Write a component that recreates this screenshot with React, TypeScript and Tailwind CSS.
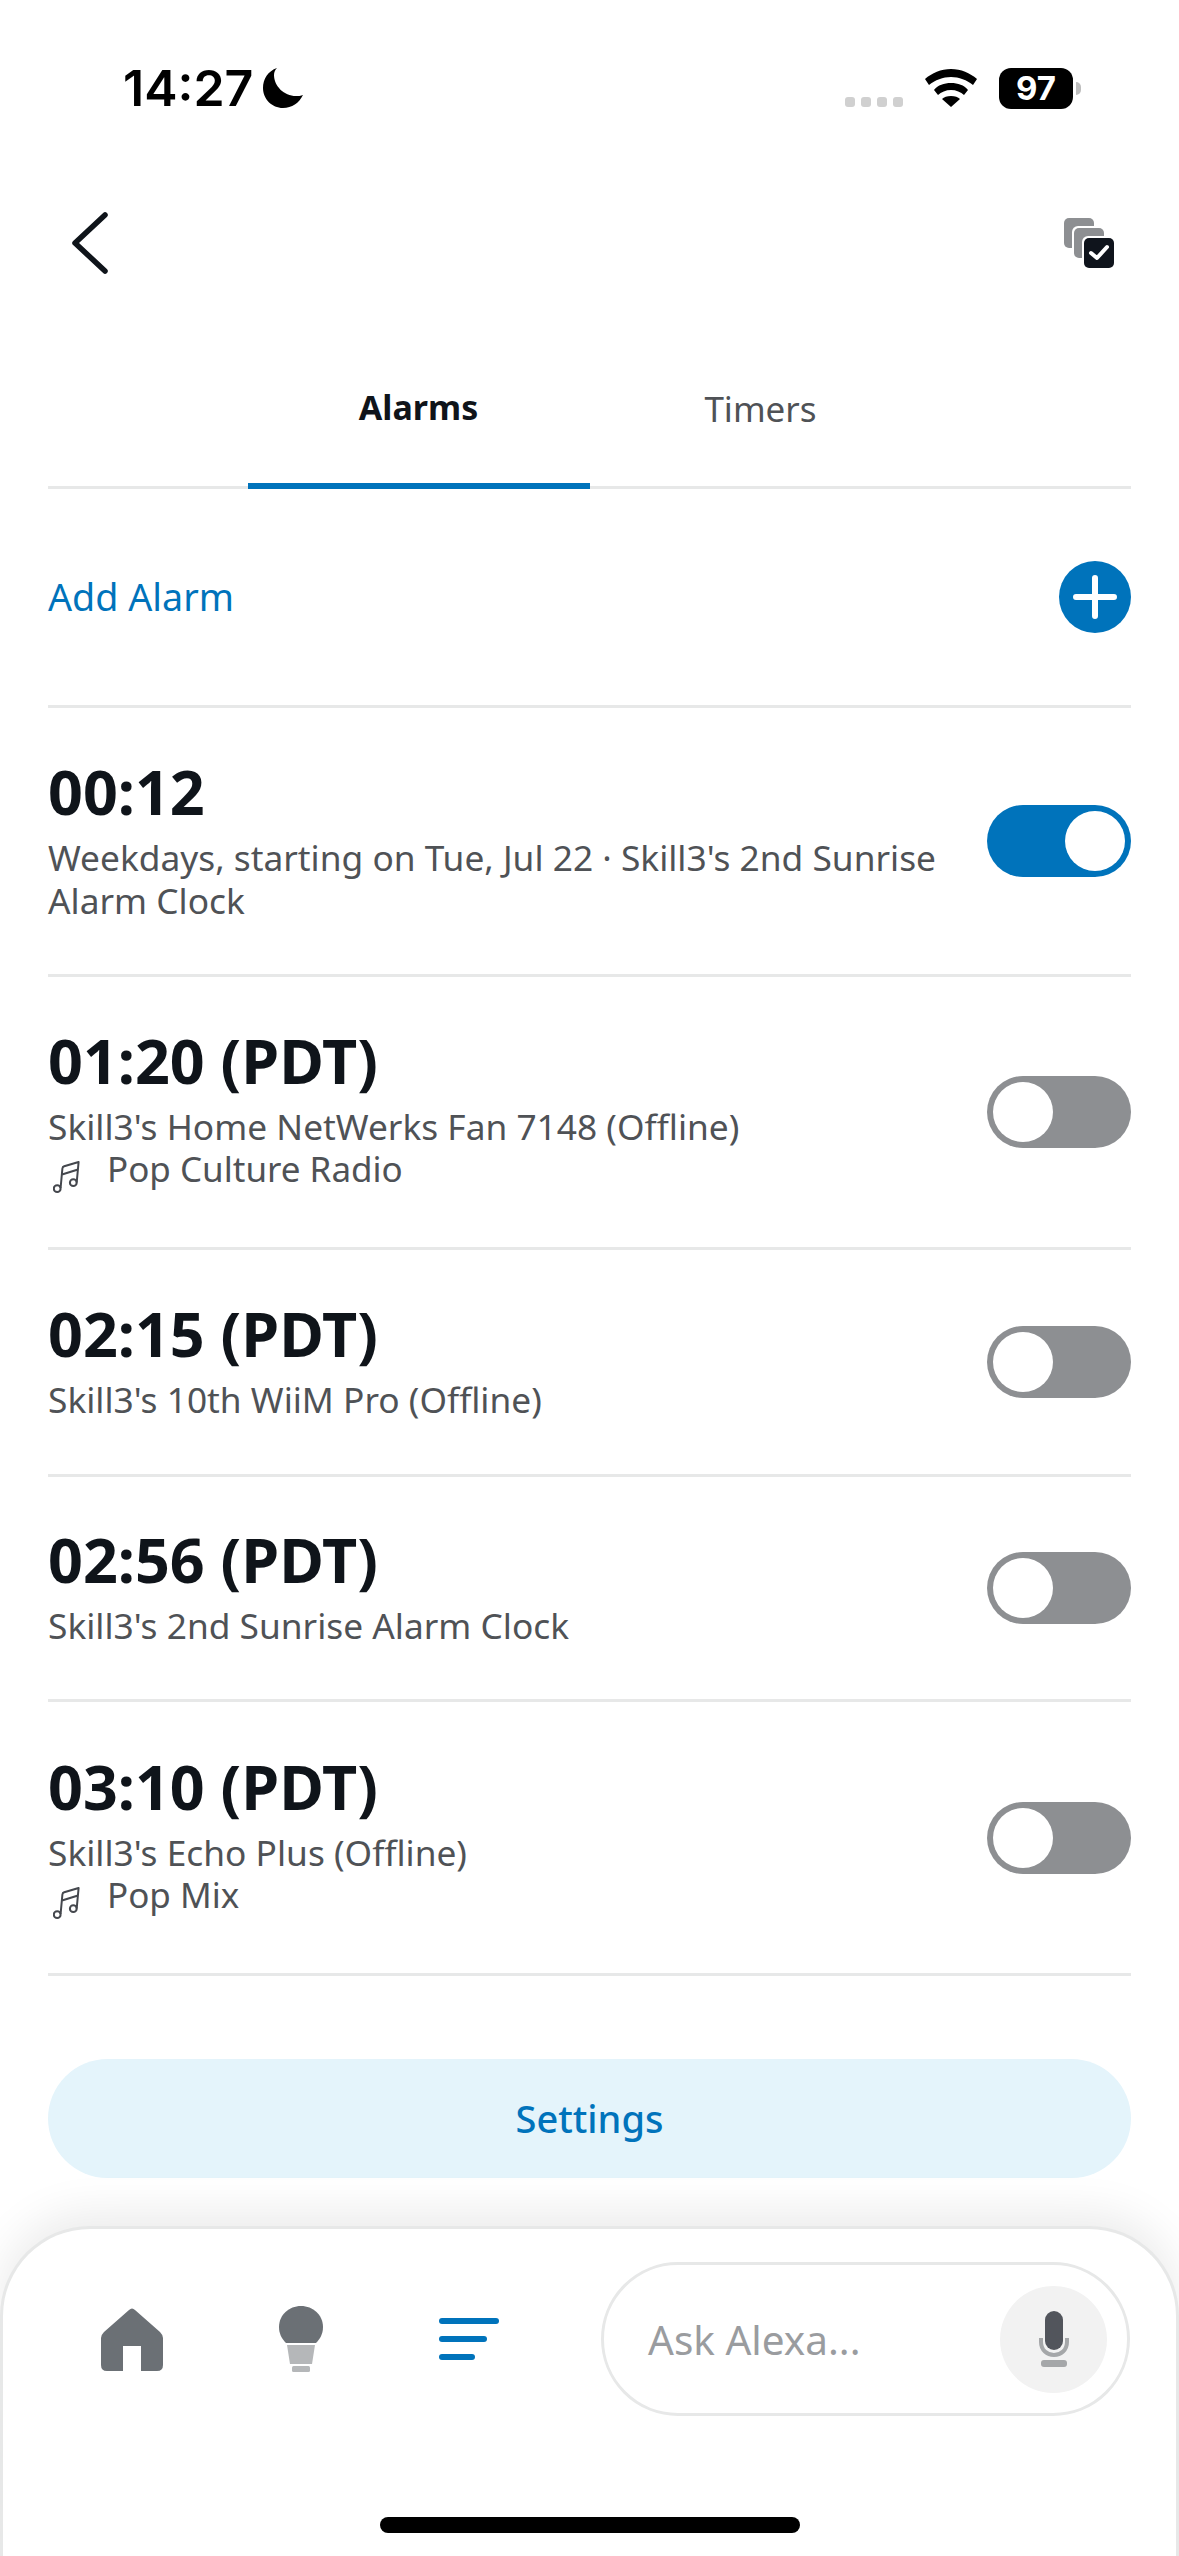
const bodyFont = "font-['Noto_Sans',sans-serif]";

function Toggle({ on }: { on: boolean }) {
  return (
    <div
      className={`flex h-[72px] w-[144px] shrink-0 items-center rounded-full p-[6px] ${
        on ? "justify-end bg-[#0073bb]" : "justify-start bg-[#8d8f92]"
      }`}
    >
      <div className="h-[60px] w-[60px] rounded-full bg-white" />
    </div>
  );
}

function NoteIcon() {
  return (
    <svg width="27" height="33" viewBox="0 0 27 33" fill="none" stroke="#44474d" strokeWidth="2" className="mt-[13px] ml-[5px] shrink-0">
      <circle cx="4.2" cy="27.7" r="3.4" />
      <circle cx="20.3" cy="21.7" r="3.4" />
      <path d="M7.6 27L9.4 7.5Q9.6 5.8 11.2 5.3L25.6 1L23.7 21.5M9 13.5L25 8.5" strokeLinejoin="round" />
    </svg>
  );
}

type Alarm = { time: string; lines: string[]; music?: string; on?: boolean; height: string };

const alarms: Alarm[] = [
  {
    time: "00:12",
    lines: ["Weekdays, starting on Tue, Jul 22 · Skill3's 2nd Sunrise", "Alarm Clock"],
    on: true,
    height: "h-[269px]",
  },
  { time: "01:20 (PDT)", lines: ["Skill3's Home NetWerks Fan 7148 (Offline)"], music: "Pop Culture Radio", height: "h-[273px]" },
  { time: "02:15 (PDT)", lines: ["Skill3's 10th WiiM Pro (Offline)"], height: "h-[227px]" },
  { time: "02:56 (PDT)", lines: ["Skill3's 2nd Sunrise Alarm Clock"], height: "h-[225px]" },
  { time: "03:10 (PDT)", lines: ["Skill3's Echo Plus (Offline)"], music: "Pop Mix", height: "h-[274px]" },
];

function AlarmRow({ alarm }: { alarm: Alarm }) {
  return (
    <div className={`flex items-center justify-between border-b-[3px] border-[#e7e8e8] ${alarm.height}`}>
      <div className="pb-[6px]">
        <div className="pb-[8px] text-[61px] leading-[73px] font-bold text-[#0f141a]">{alarm.time}</div>
        {alarm.lines.map((line) => (
          <div key={line} className="text-[35.3px] leading-[43px] text-[#4f5256]">
            {line}
          </div>
        ))}
        {alarm.music && (
          <div className="flex gap-[27px] text-[35px] leading-[42px] text-[#4f5256]">
            <NoteIcon />
            <span>{alarm.music}</span>
          </div>
        )}
      </div>
      <Toggle on={!!alarm.on} />
    </div>
  );
}

function StatusBar() {
  return (
    <div className="flex h-[190px] justify-between pt-[60px] pr-[98px] pl-[123px]">
      <div className="flex h-[56px] items-center gap-[9px]">
        <span className="font-['Inter',sans-serif] text-[50px] leading-none font-semibold text-black">14:27</span>
        <svg width="42" height="42" viewBox="0 0 42 42" fill="#000">
          <path d="M15 1C6 4 1 12 1 21c0 11 9 20 20 20 9 0 16-5 20-13-2 1-5 1-7 1C22 29 12 19 12 8c0-3 1-5 3-7z" />
        </svg>
      </div>
      <div className="flex h-[56px] items-center">
        <div className="mt-[28px] mr-[22px] flex gap-[6px]">
          <div className="h-[10px] w-[10px] rounded-[3px] bg-[#d0d0d0]" />
          <div className="h-[10px] w-[10px] rounded-[3px] bg-[#d0d0d0]" />
          <div className="h-[10px] w-[10px] rounded-[3px] bg-[#d0d0d0]" />
          <div className="h-[10px] w-[10px] rounded-[3px] bg-[#d0d0d0]" />
        </div>
        <svg width="52" height="38" viewBox="0 0 52 38" fill="#000" className="mr-[22px]">
          <path d="M26 0C16 0 7 4 0 10l4 6c6-5 14-8 22-8s16 3 22 8l4-6C45 4 36 0 26 0z" />
          <path d="M26 14c-7 0-13 2-17 7l4 5c3-3 8-5 13-5s10 2 13 5l4-5c-4-5-10-7-17-7z" />
          <path d="M26 27c-4 0-7 1-9 3l9 8 9-8c-2-2-5-3-9-3z" />
        </svg>
        <div className="flex h-[41px] w-[74px] items-center justify-center rounded-[12px] bg-black font-['Inter',sans-serif] text-[33px] leading-none font-bold text-white">
          97
        </div>
        <div className="ml-[3px] h-[13px] w-[5px] rounded-r-full bg-[#bdbdbd]" />
      </div>
    </div>
  );
}

function Header() {
  return (
    <div className="flex h-[106px] items-center justify-between pr-[65px] pl-[71px]">
      <svg width="38" height="62" viewBox="0 0 38 62" fill="none" stroke="#0f141a" strokeWidth="5.5" strokeLinecap="round" strokeLinejoin="round">
        <path d="M34 3L4 31l30 28" />
      </svg>
      <svg width="50" height="50" viewBox="0 0 50 50">
        <rect x="0" y="0" width="30" height="30" rx="5" fill="#8d8f92" />
        <rect x="8" y="8" width="32" height="32" rx="6" fill="#fff" />
        <rect x="10" y="10" width="30" height="30" rx="5" fill="#8d8f92" />
        <rect x="18" y="18" width="32" height="32" rx="6" fill="#fff" />
        <rect x="20" y="20" width="30" height="30" rx="5" fill="#0f141c" />
        <path d="M27 35l6 5 10-11" fill="none" stroke="#fff" strokeWidth="4" strokeLinecap="round" strokeLinejoin="round" />
      </svg>
    </div>
  );
}

function Tabs() {
  return (
    <div className="mx-[48px] flex h-[193px] justify-center border-b-[3px] border-[#e7e8e8]">
      <div className="-mb-[3px] flex w-[342px] items-center justify-center border-b-[6px] border-[#0073bb] pt-[36px] text-[34px] font-bold text-[#0f141a]">
        Alarms
      </div>
      <div className="flex w-[342px] items-center justify-center pt-[36px] text-[35px] text-[#4f5256]">Timers</div>
    </div>
  );
}

function BottomNav() {
  return (
    <div className="mt-auto flex h-[330px] flex-col rounded-t-[90px] border-t-[3px] border-r-[3px] border-l-[3px] border-[#e7e8e8] bg-white shadow-[0_-14px_44px_rgba(0,0,0,0.08)]">
      <div className="box-content flex h-[154px] items-center pt-[33px] pr-[46px] pl-[98px]">
        <svg width="62" height="63" viewBox="0 0 62 63" fill="#6b7075">
          <path d="M28 2Q31-1 34 2L59 24Q62 27 62 30V57Q62 63 56 63H40V38H22V63H6Q0 63 0 57V30Q0 27 3 24Z" />
        </svg>
        <svg width="44" height="66" viewBox="0 0 44 66" className="ml-[116px]">
          <path d="M22 0C10 0 0 9 0 21c0 7 3 12 7 16h30c4-4 7-9 7-16C44 9 34 0 22 0z" fill="#6b7075" />
          <path d="M8 39h28l-3 19H11z" fill="#b5b7b9" />
          <rect x="13" y="60" width="18" height="6" rx="1.5" fill="#b5b7b9" />
        </svg>
        <div className="ml-[116px] flex w-[60px] flex-col gap-[12px]">
          <div className="h-[6px] w-[60px] rounded-full bg-[#0073bb]" />
          <div className="h-[6px] w-[48px] rounded-full bg-[#0073bb]" />
          <div className="h-[6px] w-[36px] rounded-full bg-[#0073bb]" />
        </div>
        <div className="ml-[102px] flex h-[154px] flex-1 items-center justify-between rounded-full border-[3px] border-[#e7e8e8] pr-[20px] pl-[44px]">
          <span className="pt-[2px] text-[40.5px] leading-none text-[#9a9c9f]">Ask Alexa...</span>
          <div className="flex h-[107px] w-[107px] items-center justify-center rounded-full bg-[#f2f2f2]">
            <svg width="30" height="56" viewBox="0 0 30 56">
              <rect x="6" y="0" width="18" height="39" rx="9" fill="#52555c" />
              <path d="M2 27v4c0 8 6 13 13 13s13-5 13-13v-4" fill="none" stroke="#a5a7a9" strokeWidth="4" />
              <rect x="2" y="49" width="26" height="7" rx="3" fill="#a5a7a9" />
            </svg>
          </div>
        </div>
      </div>
      <div className="mt-auto mb-[23px] flex justify-center">
        <div className="h-[16px] w-[420px] rounded-full bg-black" />
      </div>
    </div>
  );
}

export default function App() {
  return (
    <div className={`flex h-[2556px] w-[1179px] flex-col overflow-hidden bg-white ${bodyFont}`}>
      <StatusBar />
      <Header />
      <Tabs />
      <div className="mx-[48px] flex h-[219px] items-center justify-between border-b-[3px] border-[#e7e8e8]">
        <span className="text-[37.7px] leading-none text-[#0073bb]">Add Alarm</span>
        <div className="flex h-[72px] w-[72px] items-center justify-center rounded-full bg-[#0073bb]">
          <svg width="44" height="44" viewBox="0 0 44 44" stroke="#fff" strokeWidth="6" strokeLinecap="round">
            <path d="M22 3v38M3 22h38" />
          </svg>
        </div>
      </div>
      <div className="mx-[48px] flex flex-col">
        {alarms.map((alarm) => (
          <AlarmRow key={alarm.time} alarm={alarm} />
        ))}
      </div>
      <button className="mx-[48px] mt-[83px] flex h-[119px] items-center justify-center rounded-full bg-[#e4f4fb] text-[38px] font-medium text-[#0073bb]">
        Settings
      </button>
      <BottomNav />
    </div>
  );
}
